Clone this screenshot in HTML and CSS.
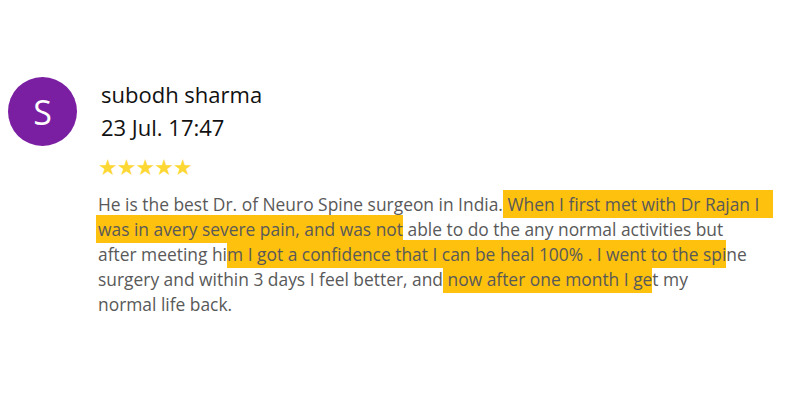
FILE: index.html
```html
<!DOCTYPE html>
<html>
<head>
<meta charset="utf-8">
<link rel="stylesheet" href="styles.css">
</head>
<body>
<div class="review">
  <div class="avatar">S</div>
  <div class="content">
    <div class="name">subodh sharma</div>
    <div class="date">23 Jul. 17:47</div>
    <div class="stars">★★★★★</div>
    <p class="text">He is the best Dr. of Neuro Spine surgeon in India.<mark class="hl hl1"> When I first met with Dr Rajan I </mark><br><mark class="hl hl2">was in avery severe pain, and was not</mark> able to do the any normal activities but<br>after meeting hi<mark class="hl">m I got a confidence that I can be heal 100% . I went to the spi</mark>ne<br>surgery and within 3 days I feel better, and<mark class="hl"> now after one month I ge</mark>t my<br>normal life back.</p>
  </div>
</div>
</body>
</html>
```

FILE: styles.css
```css
html, body {
  margin: 0;
  padding: 0;
  background: #fff;
}
.review {
  display: flex;
  padding: 77px 0 0 8px;
  font-family: "Open Sans", sans-serif;
}
.avatar {
  width: 69px;
  height: 69px;
  border-radius: 50%;
  background: #7b1fa2;
  color: #fff;
  font-size: 34px;
  display: flex;
  align-items: center;
  justify-content: center;
  flex: none;
}
.content {
  margin-left: 21px;
  width: 700px;
}
.name {
  font-size: 22px;
  font-stretch: 90%;
  color: #111;
  line-height: 30px;
  margin-left: 3px;
  padding-top: 2px;
}
.date {
  font-size: 22px;
  font-stretch: 90%;
  color: #111;
  line-height: 30px;
  margin-left: 3px;
  margin-top: 3px;
}
.stars {
  font-family: "DejaVu Sans", sans-serif;
  color: #fdd835;
  font-size: 22px;
  letter-spacing: -1px;
  line-height: 26px;
  margin-top: 13px;
}
.text {
  margin: 11px 0 0;
  font-size: 17.4px;
  line-height: 25px;
  color: #595959;
}
.hl {
  background: #fec10e;
  color: #595959;
  padding: 2px 0;
}
.hl1 {
  padding-right: 14px;
}
.hl2 {
  margin-left: -2px;
  padding-left: 2px;
}
```
